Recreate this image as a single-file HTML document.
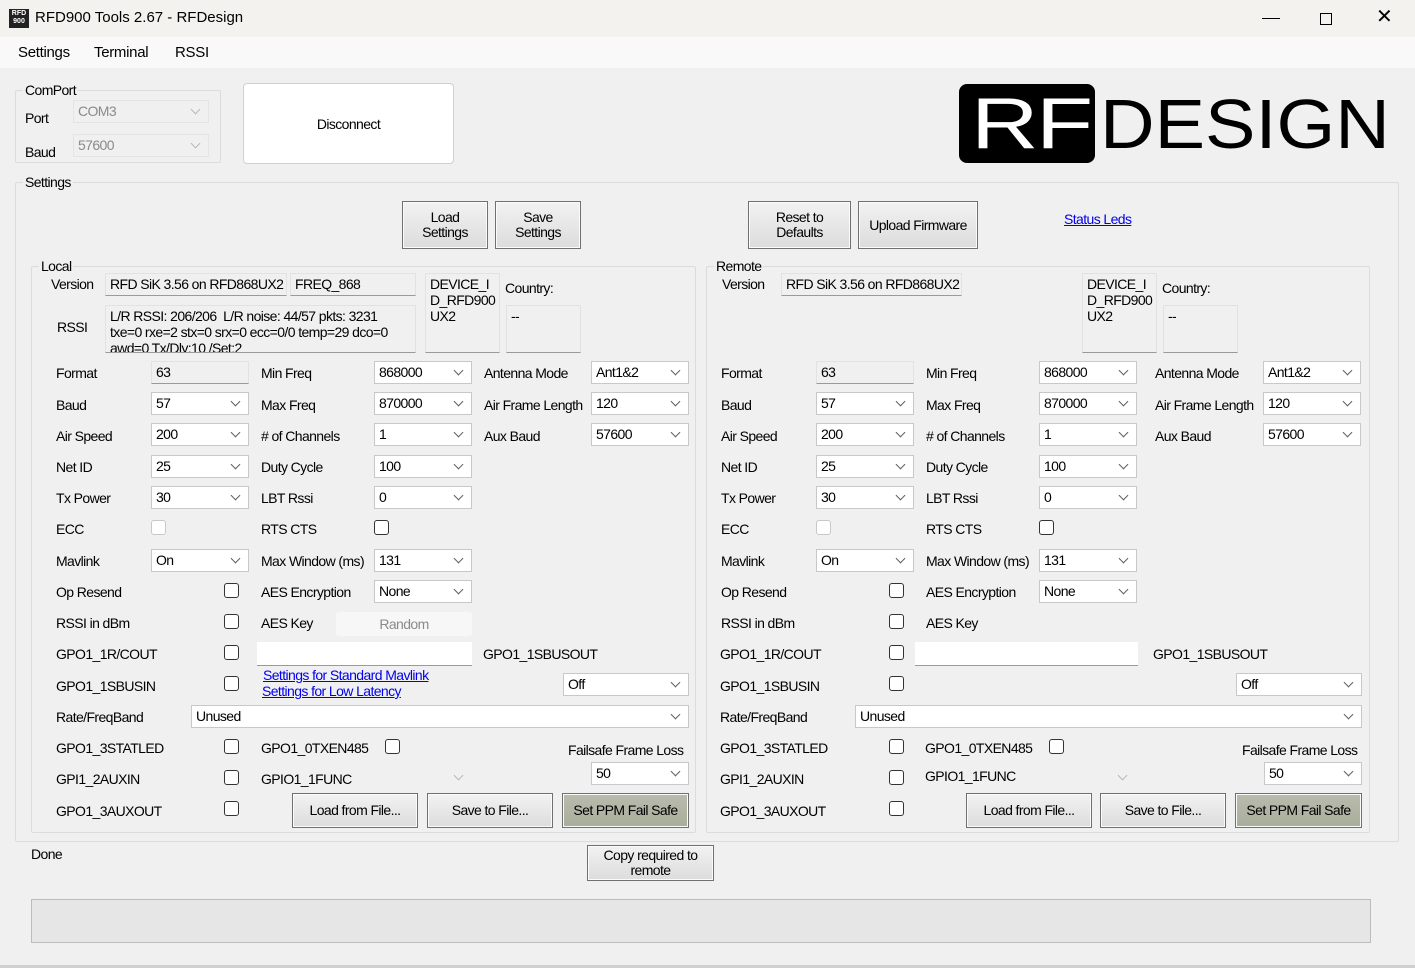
<!DOCTYPE html>
<html><head><meta charset="utf-8">
<style>
*{box-sizing:border-box;margin:0;padding:0}
body{width:1415px;height:968px;background:#f0f0f0;font-family:"Liberation Sans",sans-serif;font-size:14px;letter-spacing:-0.6px;color:#000;position:relative;overflow:hidden}
.a{position:absolute;white-space:nowrap}
.t{position:absolute;white-space:nowrap;line-height:16px}
.cb{position:absolute;height:23px;background:#fff;border:1px solid #c8c8c8;padding:2px 4px;line-height:17px}
.cb::after{content:"";position:absolute;right:9px;top:5px;width:6px;height:6px;border-right:1px solid #606060;border-bottom:1px solid #606060;transform:rotate(45deg)}
.cb.dis{background:#f0f0f0;border-color:#e4e4e4;color:#8a8a8a}
.cb.dis::after{border-color:#b8b8b8}
.tb{position:absolute;height:23px;background:#f0f0f0;border:1px solid #e2e2e2;border-bottom:1px solid #9a9a9a;padding:2px 4px;line-height:17px;overflow:hidden;white-space:nowrap}
.chk{position:absolute;width:15px;height:15px;border:1px solid #333;border-radius:3px;background:#fff}
.chk.dis{border-color:#c8c8c8}
.btn{position:absolute;background:linear-gradient(#f2f2f2,#dcdcdc);border:1px solid #707070;box-shadow:inset 0 0 0 1px #fbfbfb;text-align:center;line-height:15px;display:flex;align-items:center;justify-content:center}
.grp{position:absolute;border:1px solid #dcdcdc;border-radius:2px}
.lbl{position:absolute;background:#f0f0f0;padding:0 2px;line-height:16px}
.lnk{position:absolute;color:#0000ee;text-decoration:underline;line-height:16px;white-space:nowrap}
</style></head><body>
<!-- title bar -->
<div class="a" style="left:0;top:0;width:1415px;height:37px;background:#f3f2ee"></div>
<div class="a" style="left:9px;top:9px;width:20px;height:19px;background:#222;color:#fff;font-size:7px;line-height:8px;text-align:center;font-weight:bold;padding-top:1px;letter-spacing:0">RFD<br>900</div>
<div class="t" style="left:35px;top:10px;font-size:15px;letter-spacing:0">RFD900 Tools 2.67 - RFDesign</div>
<div class="a" style="left:1262px;top:18px;width:18px;height:1px;background:#000"></div>
<div class="a" style="left:1320px;top:13px;width:12px;height:12px;border:1px solid #000"></div>
<div class="t" style="left:1376px;top:9px;font-size:20px">&#10005;</div>
<!-- menu -->
<div class="a" style="left:0;top:37px;width:1415px;height:31px;background:#f9f9f9"></div>
<div class="t" style="left:18px;top:45px;font-size:15px;letter-spacing:-0.3px">Settings</div>
<div class="t" style="left:94px;top:45px;font-size:15px;letter-spacing:-0.3px">Terminal</div>
<div class="t" style="left:175px;top:45px;font-size:15px;letter-spacing:-0.3px">RSSI</div>

<!-- comport -->
<div class="grp" style="left:15px;top:90px;width:206px;height:73px"></div>
<div class="lbl" style="left:23px;top:82px">ComPort</div>
<div class="t" style="left:25px;top:110px">Port</div>
<div class="cb dis" style="left:73px;top:100px;width:136px">COM3</div>
<div class="t" style="left:25px;top:144px">Baud</div>
<div class="cb dis" style="left:73px;top:134px;width:136px">57600</div>
<div class="a" style="left:243px;top:83px;width:211px;height:81px;background:#fff;border:1px solid #d0d0d0;border-radius:4px;display:flex;align-items:center;justify-content:center">Disconnect</div>

<!-- logo -->
<div class="a" style="left:959px;top:84px;width:136px;height:79px;background:#000;border-radius:8px;overflow:hidden">
 <div class="t" style="left:12px;top:9px;color:#fff;font-size:72px;line-height:62px;letter-spacing:-2px;transform:scaleX(1.3);transform-origin:left">RF</div>
</div>
<div class="t" style="left:1100px;top:94px;font-size:70px;line-height:60px;letter-spacing:0px;transform:scaleX(1.08);transform-origin:left">DESIGN</div>

<!-- settings group -->
<div class="grp" style="left:15px;top:182px;width:1384px;height:660px"></div>
<div class="lbl" style="left:23px;top:174px">Settings</div>
<div class="btn" style="left:402px;top:201px;width:86px;height:48px">Load<br>Settings</div>
<div class="btn" style="left:495px;top:201px;width:86px;height:48px">Save<br>Settings</div>
<div class="btn" style="left:748px;top:201px;width:103px;height:48px">Reset to<br>Defaults</div>
<div class="btn" style="left:858px;top:201px;width:120px;height:48px">Upload Firmware</div>
<div class="lnk" style="left:1064px;top:211px">Status Leds</div>

<!-- LOCAL -->
<div class="grp" style="left:31px;top:266px;width:665px;height:567px"></div>
<div class="lbl" style="left:39px;top:258px">Local</div>
<div class="t" style="left:51px;top:276px">Version</div>
<div class="tb" style="left:105px;top:273px;width:182px">RFD SiK 3.56 on RFD868UX2</div>
<div class="tb" style="left:290px;top:273px;width:126px">FREQ_868</div>
<div class="tb" style="left:425px;top:273px;width:75px;height:80px;line-height:16px;padding-top:2px">DEVICE_I<br>D_RFD900<br>UX2</div>
<div class="t" style="left:505px;top:280px">Country:</div>
<div class="tb" style="left:506px;top:305px;width:75px;height:48px">--</div>
<div class="t" style="left:57px;top:319px">RSSI</div>
<div class="tb" style="left:105px;top:305px;width:311px;height:48px;line-height:16px;padding-top:2px">L/R RSSI: 206/206&nbsp; L/R noise: 44/57 pkts: 3231<br>txe=0 rxe=2 stx=0 srx=0 ecc=0/0 temp=29 dco=0<br>awd=0 Tx/Dly:10 /Set:2</div>

<div class="t" style="left:56px;top:365px">Format</div><div class="tb" style="left:151px;top:361px;width:98px">63</div>
<div class="t" style="left:261px;top:365px">Min Freq</div><div class="cb" style="left:374px;top:361px;width:98px">868000</div>
<div class="t" style="left:484px;top:365px">Antenna Mode</div><div class="cb" style="left:591px;top:361px;width:98px">Ant1&amp;2</div>
<div class="t" style="left:56px;top:397px">Baud</div><div class="cb" style="left:151px;top:392px;width:98px">57</div>
<div class="t" style="left:261px;top:397px">Max Freq</div><div class="cb" style="left:374px;top:392px;width:98px">870000</div>
<div class="t" style="left:484px;top:397px">Air Frame Length</div><div class="cb" style="left:591px;top:392px;width:98px">120</div>
<div class="t" style="left:56px;top:428px">Air Speed</div><div class="cb" style="left:151px;top:423px;width:98px">200</div>
<div class="t" style="left:261px;top:428px"># of Channels</div><div class="cb" style="left:374px;top:423px;width:98px">1</div>
<div class="t" style="left:484px;top:428px">Aux Baud</div><div class="cb" style="left:591px;top:423px;width:98px">57600</div>
<div class="t" style="left:56px;top:459px">Net ID</div><div class="cb" style="left:151px;top:455px;width:98px">25</div>
<div class="t" style="left:261px;top:459px">Duty Cycle</div><div class="cb" style="left:374px;top:455px;width:98px">100</div>
<div class="t" style="left:56px;top:490px">Tx Power</div><div class="cb" style="left:151px;top:486px;width:98px">30</div>
<div class="t" style="left:261px;top:490px">LBT Rssi</div><div class="cb" style="left:374px;top:486px;width:98px">0</div>
<div class="t" style="left:56px;top:521px">ECC</div><div class="chk dis" style="left:151px;top:520px"></div>
<div class="t" style="left:261px;top:521px">RTS CTS</div><div class="chk" style="left:374px;top:520px"></div>
<div class="t" style="left:56px;top:553px">Mavlink</div><div class="cb" style="left:151px;top:549px;width:98px">On</div>
<div class="t" style="left:261px;top:553px">Max Window (ms)</div><div class="cb" style="left:374px;top:549px;width:98px">131</div>
<div class="t" style="left:56px;top:584px">Op Resend</div><div class="chk" style="left:224px;top:583px"></div>
<div class="t" style="left:261px;top:584px">AES Encryption</div><div class="cb" style="left:374px;top:580px;width:98px">None</div>
<div class="t" style="left:56px;top:615px">RSSI in dBm</div><div class="chk" style="left:224px;top:614px"></div>
<div class="t" style="left:261px;top:615px">AES Key</div>
<div class="a" style="left:336px;top:612px;width:136px;height:24px;background:#f7f7f7;border-radius:3px;color:#8a8a8a;text-align:center;line-height:24px">Random</div>
<div class="t" style="left:56px;top:646px">GPO1_1R/COUT</div><div class="chk" style="left:224px;top:645px"></div>
<div class="a" style="left:257px;top:642px;width:215px;height:24px;background:#fff;border-bottom:1px solid #9a9a9a"></div>
<div class="t" style="left:483px;top:646px">GPO1_1SBUSOUT</div>
<div class="t" style="left:56px;top:678px">GPO1_1SBUSIN</div><div class="chk" style="left:224px;top:676px"></div>
<div class="lnk" style="left:263px;top:667px">Settings for Standard Mavlink</div>
<div class="lnk" style="left:262px;top:683px">Settings for Low Latency</div>
<div class="cb" style="left:563px;top:673px;width:126px">Off</div>
<div class="t" style="left:56px;top:709px">Rate/FreqBand</div><div class="cb" style="left:191px;top:705px;width:498px">Unused</div>
<div class="t" style="left:56px;top:740px">GPO1_3STATLED</div><div class="chk" style="left:224px;top:739px"></div>
<div class="t" style="left:261px;top:740px">GPO1_0TXEN485</div><div class="chk" style="left:385px;top:739px"></div>
<div class="t" style="left:568px;top:742px">Failsafe Frame Loss</div>
<div class="t" style="left:56px;top:771px">GPI1_2AUXIN</div><div class="chk" style="left:224px;top:770px"></div>
<div class="t" style="left:261px;top:771px">GPIO1_1FUNC</div><div class="cb dis" style="left:374px;top:766px;width:98px;background:#f0f0f0;border-color:#f0f0f0"></div>
<div class="cb" style="left:591px;top:762px;width:98px">50</div>
<div class="t" style="left:56px;top:803px">GPO1_3AUXOUT</div><div class="chk" style="left:224px;top:801px"></div>
<div class="btn" style="left:292px;top:793px;width:126px;height:35px">Load from File...</div>
<div class="btn" style="left:427px;top:793px;width:126px;height:35px">Save to File...</div>
<div class="btn" style="left:562px;top:793px;width:127px;height:35px;background:linear-gradient(#b9bcad,#a9ad9c)">Set PPM Fail Safe</div>

<!-- REMOTE -->
<div class="grp" style="left:706px;top:266px;width:664px;height:567px"></div>
<div class="lbl" style="left:714px;top:258px">Remote</div>
<div class="t" style="left:722px;top:276px">Version</div>
<div class="tb" style="left:781px;top:273px;width:181px">RFD SiK 3.56 on RFD868UX2</div>
<div class="tb" style="left:1082px;top:273px;width:75px;height:80px;line-height:16px;padding-top:2px">DEVICE_I<br>D_RFD900<br>UX2</div>
<div class="t" style="left:1162px;top:280px">Country:</div>
<div class="tb" style="left:1163px;top:305px;width:75px;height:48px">--</div>
<div style="position:absolute;left:665px;top:0">
<div class="t" style="left:56px;top:365px">Format</div><div class="tb" style="left:151px;top:361px;width:98px">63</div>
<div class="t" style="left:261px;top:365px">Min Freq</div><div class="cb" style="left:374px;top:361px;width:98px">868000</div>
<div class="t" style="left:490px;top:365px">Antenna Mode</div><div class="cb" style="left:598px;top:361px;width:98px">Ant1&amp;2</div>
<div class="t" style="left:56px;top:397px">Baud</div><div class="cb" style="left:151px;top:392px;width:98px">57</div>
<div class="t" style="left:261px;top:397px">Max Freq</div><div class="cb" style="left:374px;top:392px;width:98px">870000</div>
<div class="t" style="left:490px;top:397px">Air Frame Length</div><div class="cb" style="left:598px;top:392px;width:98px">120</div>
<div class="t" style="left:56px;top:428px">Air Speed</div><div class="cb" style="left:151px;top:423px;width:98px">200</div>
<div class="t" style="left:261px;top:428px"># of Channels</div><div class="cb" style="left:374px;top:423px;width:98px">1</div>
<div class="t" style="left:490px;top:428px">Aux Baud</div><div class="cb" style="left:598px;top:423px;width:98px">57600</div>
<div class="t" style="left:56px;top:459px">Net ID</div><div class="cb" style="left:151px;top:455px;width:98px">25</div>
<div class="t" style="left:261px;top:459px">Duty Cycle</div><div class="cb" style="left:374px;top:455px;width:98px">100</div>
<div class="t" style="left:56px;top:490px">Tx Power</div><div class="cb" style="left:151px;top:486px;width:98px">30</div>
<div class="t" style="left:261px;top:490px">LBT Rssi</div><div class="cb" style="left:374px;top:486px;width:98px">0</div>
<div class="t" style="left:56px;top:521px">ECC</div><div class="chk dis" style="left:151px;top:520px"></div>
<div class="t" style="left:261px;top:521px">RTS CTS</div><div class="chk" style="left:374px;top:520px"></div>
<div class="t" style="left:56px;top:553px">Mavlink</div><div class="cb" style="left:151px;top:549px;width:98px">On</div>
<div class="t" style="left:261px;top:553px">Max Window (ms)</div><div class="cb" style="left:374px;top:549px;width:98px">131</div>
<div class="t" style="left:56px;top:584px">Op Resend</div><div class="chk" style="left:224px;top:583px"></div>
<div class="t" style="left:261px;top:584px">AES Encryption</div><div class="cb" style="left:374px;top:580px;width:98px">None</div>
<div class="t" style="left:56px;top:615px">RSSI in dBm</div><div class="chk" style="left:224px;top:614px"></div>
<div class="t" style="left:261px;top:615px">AES Key</div>
<div class="t" style="left:55px;top:646px">GPO1_1R/COUT</div><div class="chk" style="left:224px;top:645px"></div>
<div class="a" style="left:250px;top:642px;width:223px;height:24px;background:#fff;border-bottom:1px solid #9a9a9a"></div>
<div class="t" style="left:488px;top:646px">GPO1_1SBUSOUT</div>
<div class="t" style="left:55px;top:678px">GPO1_1SBUSIN</div><div class="chk" style="left:224px;top:676px"></div>
<div class="cb" style="left:571px;top:673px;width:126px">Off</div>
<div class="t" style="left:55px;top:709px">Rate/FreqBand</div><div class="cb" style="left:190px;top:705px;width:507px">Unused</div>
<div class="t" style="left:55px;top:740px">GPO1_3STATLED</div><div class="chk" style="left:224px;top:739px"></div>
<div class="t" style="left:260px;top:740px">GPO1_0TXEN485</div><div class="chk" style="left:384px;top:739px"></div>
<div class="t" style="left:577px;top:742px">Failsafe Frame Loss</div>
<div class="t" style="left:55px;top:771px">GPI1_2AUXIN</div><div class="chk" style="left:224px;top:770px"></div>
<div class="t" style="left:260px;top:768px">GPIO1_1FUNC</div><div class="cb dis" style="left:373px;top:766px;width:98px;background:#f0f0f0;border-color:#f0f0f0"></div>
<div class="cb" style="left:599px;top:762px;width:98px">50</div>
<div class="t" style="left:55px;top:803px">GPO1_3AUXOUT</div><div class="chk" style="left:224px;top:801px"></div>
<div class="btn" style="left:301px;top:793px;width:126px;height:35px">Load from File...</div>
<div class="btn" style="left:435px;top:793px;width:126px;height:35px">Save to File...</div>
<div class="btn" style="left:570px;top:793px;width:127px;height:35px;background:linear-gradient(#b9bcad,#a9ad9c)">Set PPM Fail Safe</div>
</div>

<!-- bottom -->
<div class="t" style="left:31px;top:846px">Done</div>
<div class="btn" style="left:587px;top:845px;width:127px;height:36px">Copy required to<br>remote</div>
<div class="a" style="left:31px;top:899px;width:1340px;height:44px;background:#e6e6e6;border:1px solid #bcbcbc"></div>
<div class="a" style="left:0;top:965px;width:1415px;height:3px;background:#d0d0d0"></div>
</body></html>
